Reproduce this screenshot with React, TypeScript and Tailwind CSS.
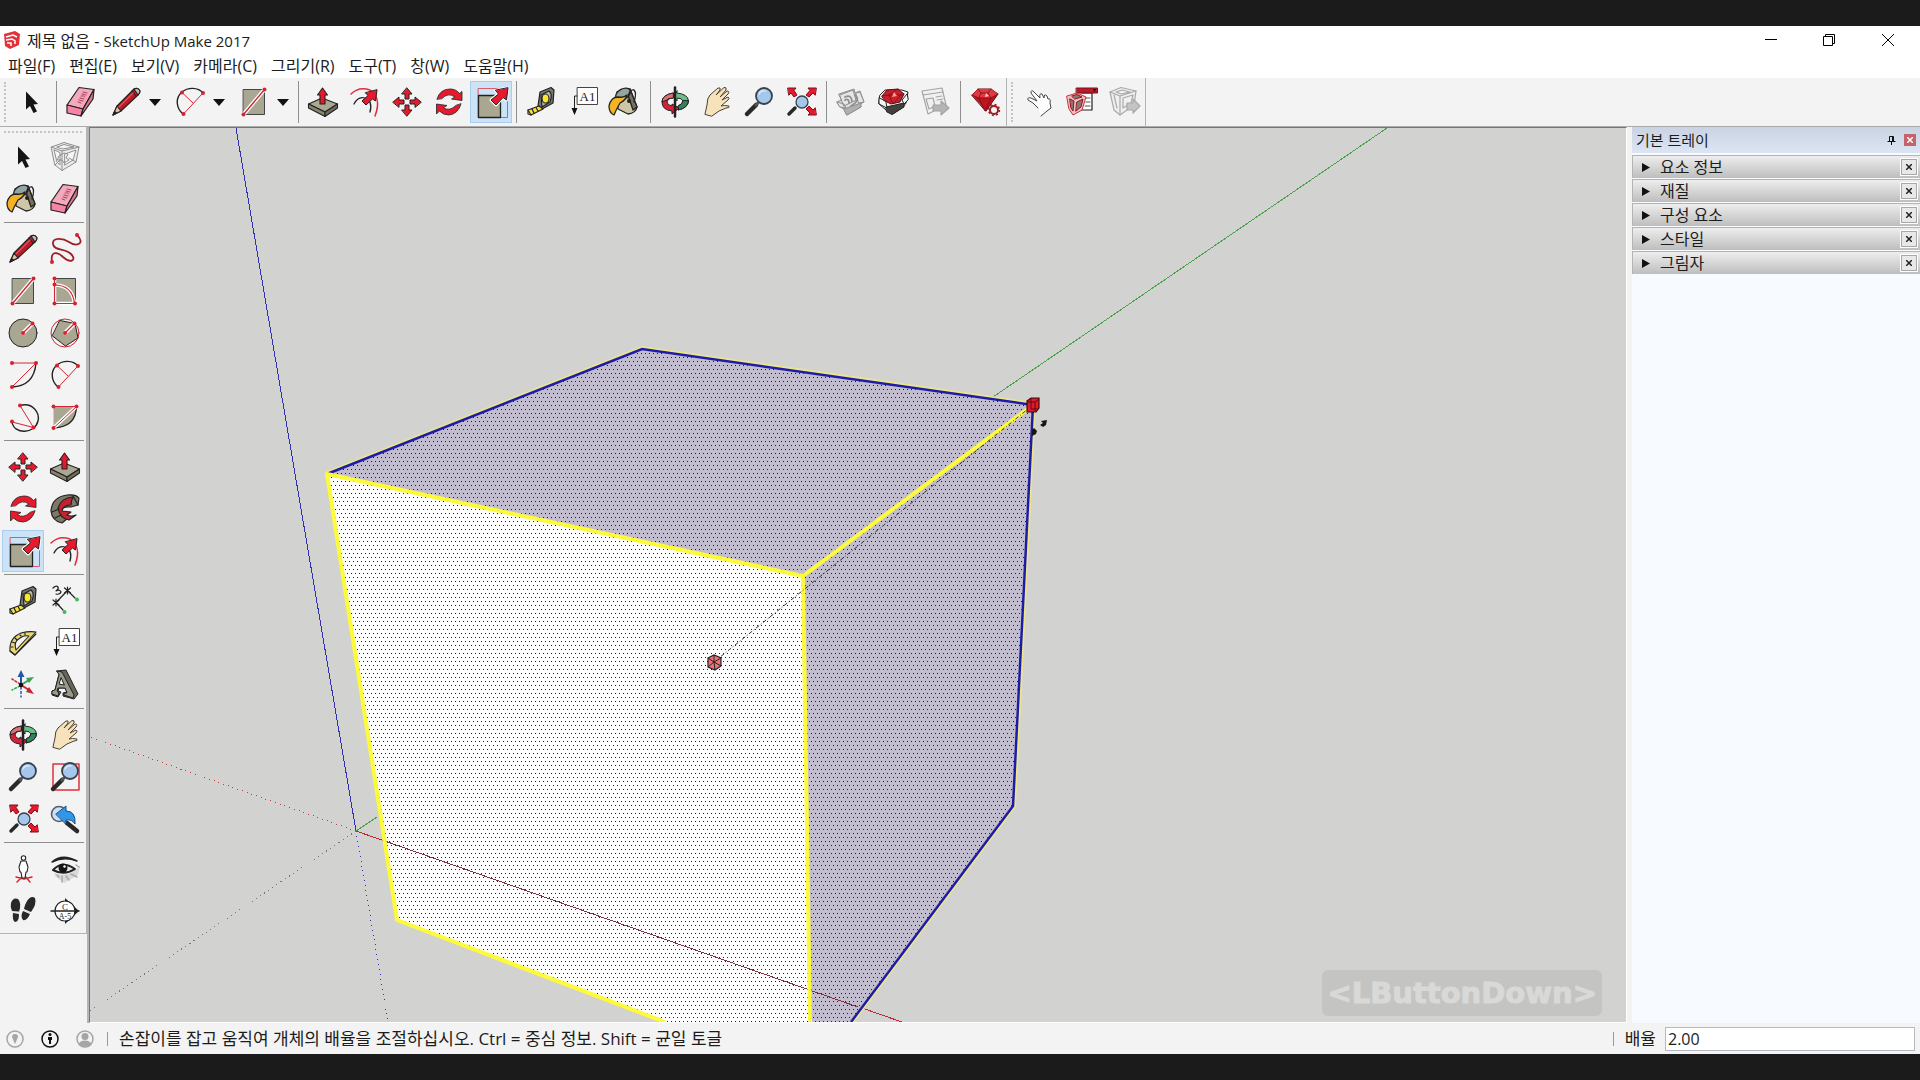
import React from 'react';

const svgProps = {
  viewBox: '0 0 32 32',
  className: 'w-8 h-8 shrink-0 overflow-visible',
  fill: 'none',
  strokeLinecap: 'round' as const,
  strokeLinejoin: 'round' as const,
};

const RED = '#e8192c';
const DARK = '#222222';
const STONE = '#a9a792';

const Dot = ({ x, y }: { x: number; y: number }) => <circle cx={x} cy={y} r="2" fill="#d8202e" />;

const SelectIcon = () => (
  <svg {...svgProps}>
    <path d="M11 5.5V23.5L15 20L18.5 27L22 25.5L18.5 18.5L23 18Z" fill="#151515" />
  </svg>
);

const ComponentIcon = () => (
  <svg {...svgProps} stroke="#8e8e8e" strokeWidth="1">
    <path d="M2.5 6L15 1.5L30 6L27 21L13 29.500L6 24Z" fill="#ececec" />
    <path d="M2.500 6L13 10L30 6M13 10V29.500M5 9L8 21L11 24V12ZM16 13L27 9L24 19L16 24ZM8 6L15 3.500L25 6L14 8Z" fill="#f6f6f6" />
    <path d="M10 15L15 12L19 13L17 17L20 19L15 22L13 19L9 19ZM6 24L11 19M27 21L20 17" />
  </svg>
);

const BucketIcon = () => (
  <svg {...svgProps} stroke={DARK} strokeWidth="1.3">
    <path d="M8 6L21 3L28 21Q27 27 19 28L9 23Z" fill="#cfc6a6" />
    <path d="M18 6L21 3L28 21L24 24Z" fill="#77715e" />
    <ellipse cx="14" cy="8" rx="8" ry="5" transform="rotate(-30 14 8)" fill="#91a5a4" />
    <path d="M0 20Q2 11 9 11Q15 12 18 9Q17 14 11 17Q7 24 5 29Q0 27 0 20Z" fill="#f5b324" />
    <path d="M19 12Q20 3 25 4Q28 7 25 16" />
    <circle cx="20" cy="15" r="1.3" fill={DARK} />
  </svg>
);

const EraserIcon = () => (
  <svg {...svgProps} stroke={DARK} strokeWidth="1.2">
    <path d="M2 19L14 1.5L29 3.5L18 23Z" fill="#f5a9bd" />
    <path d="M2 19L18 23L16 30L2 27Z" fill="#f884a5" />
    <path d="M18 23L29 3.5L28 13L16 30Z" fill="#db7590" />
    <path d="M14 14L18 15M15 12L19 13M16 10Q19 9 20 11M17 8L21 9M18 6L22 7M13 16L16 17" stroke="#9b3850" strokeWidth="0.9" />
  </svg>
);

const PencilIcon = () => (
  <svg {...svgProps} stroke={DARK} strokeWidth="1.1">
    <path d="M3 29L7 20L24 3Q28 1 30 5Q30 7 28 9L11 25Z" fill="#b71e28" />
    <path d="M3 29L7 20L11 25Z" fill="#d9c49c" />
    <path d="M3 29L4.500 25.500L6.500 27Z" fill={DARK} />
    <path d="M22 5L26 10M24 3Q28 1 30 5Q30 7 28 9Z" fill="#c8b9ae" />
    <path d="M9 21L23 7" stroke="#e05560" />
  </svg>
);

const FreehandIcon = () => (
  <svg {...svgProps}>
    <path d="M3 29C1 17 9 19 14 24C22 31 28 27 22 21C16 15 5 18 4 11C3 4 14 5 20 9C27 14 37 11 28 2" stroke="#9c1f2c" strokeWidth="1.8" />
    <Dot x={3} y={29} />
    <Dot x={28} y={2} />
  </svg>
);

const RectIcon = () => (
  <svg {...svgProps}>
    <rect x="5.500" y="3.500" width="21" height="25" fill={STONE} stroke="#444" />
    <path d="M5.500 28.500L26.500 3.500" stroke="#fff" strokeWidth="4" />
    <path d="M5.500 28.500L26.500 3.500" stroke="#c52632" strokeWidth="1.3" />
    <Dot x={5.5} y={28.5} />
    <Dot x={26.5} y={3.5} />
  </svg>
);

const RotRectIcon = () => (
  <svg {...svgProps}>
    <path d="M5.500 3.500H26.500V28.500H5.500Z" fill={STONE} stroke="#444" />
    <path d="M5.500 3.500V28.500H26M5.500 10Q23 10 25.500 28" stroke="#fff" strokeWidth="3.500" />
    <path d="M5.500 3.500V28.500H26M5.500 10Q23 10 25.500 28" stroke="#d22634" strokeWidth="1.2" />
    <Dot x={5.5} y={3.5} />
    <Dot x={5.5} y={9.5} />
    <Dot x={5.5} y={28.5} />
    <Dot x={26} y={28.5} />
  </svg>
);

const CircleIcon = () => (
  <svg {...svgProps}>
    <circle cx="16" cy="16" r="14" fill={STONE} stroke={DARK} />
    <path d="M16 16L25.500 6.500" stroke="#fff" strokeWidth="4" />
    <path d="M16 16L25.500 6.500" stroke="#d22634" strokeWidth="1.3" />
    <Dot x={16} y={16} />
    <Dot x={25.5} y={6.5} />
  </svg>
);

const PolygonIcon = () => (
  <svg {...svgProps}>
    <circle cx="16" cy="16" r="14" stroke="#d22634" />
    <path d="M11 3.500L26 6.500L29 21L16.500 29L3.500 19Z" fill={STONE} stroke={DARK} />
    <path d="M16 16L25.500 6.500" stroke="#fff" strokeWidth="4" />
    <path d="M16 16L25.500 6.500" stroke="#d22634" strokeWidth="1.3" />
    <Dot x={16} y={16} />
    <Dot x={25.5} y={6.5} />
  </svg>
);

const ArcIcon = () => (
  <svg {...svgProps}>
    <path d="M29 4Q27 27 5 28" stroke={DARK} strokeWidth="1.4" />
    <path d="M5 4H29L5 28" stroke="#d22634" />
    <Dot x={5} y={4} />
    <Dot x={29} y={4} />
    <Dot x={5} y={28} />
  </svg>
);

const TwoPointArcIcon = () => (
  <svg {...svgProps}>
    <path d="M9 28C2 22 1 12 8 6C14 1 24 1 29 7" stroke={DARK} strokeWidth="1.4" />
    <path d="M8 6.500L19 17M29 7L9.500 28" stroke="#d22634" />
    <Dot x={8} y={6.5} />
    <Dot x={29} y={7} />
    <Dot x={9.5} y={28} />
  </svg>
);

const ThreePointArcIcon = () => (
  <svg {...svgProps}>
    <path d="M13 4.500C26 1 33 12 31 20C28 33 7 34 5 21" stroke={DARK} strokeWidth="1.4" />
    <path d="M13 4.500L26.500 26.500L5 21" stroke="#d22634" />
    <Dot x={13} y={4.5} />
    <Dot x={5} y={20.5} />
    <Dot x={26.5} y={26.5} />
  </svg>
);

const PieIcon = () => (
  <svg {...svgProps}>
    <path d="M4.500 5.500H27.500Q27 26 4.500 27Z" fill={STONE} />
    <path d="M27.500 5.500Q27 26 4.500 27" stroke={DARK} strokeWidth="1.3" />
    <path d="M4.500 27L27.500 5.500" stroke="#fff" strokeWidth="3.500" />
    <path d="M4.500 5.500H27.500L4.500 27" stroke="#d22634" />
    <Dot x={4.5} y={5.5} />
    <Dot x={27.5} y={5.5} />
    <Dot x={4.5} y={27} />
  </svg>
);

const MoveIcon = () => (
  <svg {...svgProps} fill={RED} stroke={DARK} strokeWidth="1">
    <path d="M16 2L21 8H18V13H14V8H11Z" />
    <path d="M16 30L21 24H18V19H14V24H11Z" />
    <path d="M2 16L8 11V14H13V18H8V21Z" />
    <path d="M30 16L24 11V14H19V18H24V21Z" />
  </svg>
);

const PushPullIcon = () => (
  <svg {...svgProps} stroke={DARK} strokeWidth="1.100">
    <path d="M1.500 18L15 12L30.500 18L18 26Z" fill="#aaa892" />
    <path d="M1.500 18L18 26V30.500L1.500 22Z" fill="#88866f" />
    <path d="M18 26L30.500 18V22L18 30.500Z" fill="#6f6d5c" />
    <path d="M15.500 2L20.500 9H18V18H13V9H10.500Z" fill={RED} />
  </svg>
);

const RotateIcon = () => (
  <svg {...svgProps} fill={RED} stroke={DARK} strokeWidth="0.800">
    <path d="M4 13Q7 3 17 3Q23 3 26.500 7.500L29 5.500V14.500L18.500 13L22 11Q15 6 9 12.500Z" />
    <path d="M28 18Q25 28 16 29Q10 29 6.500 25L3.500 28V18L14 19.500L10.500 21.500Q16 26 23 19.500Z" />
  </svg>
);

const FollowMeIcon = () => (
  <svg {...svgProps} stroke={DARK} strokeWidth="1.200">
    <path d="M2 18Q3 4 18 2Q27 1 30 5L29 12L22 14Q12 13 11 19Q14 25 19 25L13 30Q3 28 2 18Z" fill="#7b7968" />
    <path d="M9 15Q12 5 24 4Q22 8 22 12Q14 12 13 18L22 19L18 22Q22 24 27 22L20 27Q11 26 9 15Z" fill="#c3222f" />
    <path d="M3 19L10 16M24 3L29 12M6 25L12 22" />
  </svg>
);

const ScaleIcon = () => (
  <svg {...svgProps}>
    <rect x="3.500" y="2.500" width="29" height="29" stroke="#e0596a" />
    <rect x="3.500" y="9.500" width="22" height="22" fill={STONE} stroke={DARK} strokeWidth="1.300" />
    <path d="M33 2L31.500 14L28 11.500L21 19L16 14L23.500 8L20.500 4.500Z" fill={RED} stroke="#fff" strokeWidth="3" />
    <path d="M33 2L31.500 14L28 11.500L21 19L16 14L23.500 8L20.500 4.500Z" fill={RED} stroke={DARK} />
  </svg>
);

const OffsetIcon = () => (
  <svg {...svgProps}>
    <path d="M2 8Q10 0 21 4Q33 12 26 30" stroke="#e02b3b" strokeWidth="1.500" />
    <path d="M5 18Q9 10 16 12Q24 15 21 26" stroke={DARK} strokeWidth="1.300" />
    <path d="M28 4L26.500 15L23.500 13L17 19L13 15L19 9.500L16.500 7Z" fill={RED} stroke={DARK} />
  </svg>
);

const TapeIcon = () => (
  <svg {...svgProps} stroke={DARK} strokeWidth="1.200">
    <path d="M15 6L26 1.500L29 4L28 17L17 23L13 20Z" fill="#77776f" />
    <path d="M16 9L24 5Q28 8 25 16L17 21Z" fill="#b9b9aa" />
    <ellipse cx="20.500" cy="12.500" rx="3.500" ry="4.500" fill="#f8e92f" />
    <path d="M14 20L3 24L6 29L18 23Z" fill="#f4e13a" />
    <path d="M7 23L9 27M11 21.500L13 25M3 24V28L6 29" />
  </svg>
);

const DimensionIcon = () => (
  <svg {...svgProps} stroke={DARK} strokeWidth="1.200">
    <path d="M7 17.500L18.500 5.500M7 17.500L14 25M18.500 5.500L26 13" />
    <path d="M4 15L10 20M4 20L10 15M7 14V21M15.500 3L21.500 8M15.500 8L21.500 3M18.500 2V9" />
    <path d="M4 3Q7 0 9 2Q10 4 7 6Q11 4 12 7Q11 10 7 9" />
    <circle cx="15.500" cy="27" r="2" fill="#44b85a" stroke="none" />
    <circle cx="28" cy="14.500" r="2" fill="#44b85a" stroke="none" />
  </svg>
);

const ProtractorIcon = () => (
  <svg {...svgProps} stroke={DARK} strokeWidth="1.100">
    <path d="M29 5L8 28L3 24Q2 11 14 6Q22 4 29 5Z" fill="#e8d775" />
    <path d="M22 9L9 23Q6 15 13 11Q17 8 22 9Z" fill="#f4f4f4" />
    <path d="M4 20H6M5 15L8 16M8 11L10 13M13 8L14 9M18 6V8M3 24L8 28L29 7" />
  </svg>
);

const TextIcon = () => (
  <svg {...svgProps}>
    <path d="M10.500 10H7.500V25" stroke={DARK} />
    <path d="M4.500 22H10.500L7.500 29Z" fill="#111" />
    <rect x="10.500" y="1.500" width="20" height="17" fill="#fff" stroke="#444" />
    <text x="20.500" y="14.500" textAnchor="middle" fontSize="13" fill="#222" className="font-['Liberation_Serif',serif]">A1</text>
  </svg>
);

const AxesIcon = () => (
  <svg {...svgProps}>
    <path d="M14 16V5" stroke="#2557a8" strokeWidth="2" />
    <path d="M14 1L17.500 8H10.500Z" fill="#2557a8" />
    <path d="M14 16L22 11" stroke="#3a9f57" strokeWidth="2" />
    <path d="M27 8L19 9L22 14Z" fill="#3a9f57" />
    <path d="M14 16L22 21" stroke="#c52632" strokeWidth="2" />
    <path d="M27 25L19 23L22 18Z" fill="#c52632" />
    <path d="M13 15L5 10" stroke="#c52632" strokeWidth="1.500" strokeDasharray="2 2" />
    <path d="M13 17L5 21" stroke="#3a9f57" strokeWidth="1.500" strokeDasharray="2 2" />
    <path d="M14 18V28" stroke="#2557a8" strokeWidth="1.500" strokeDasharray="2 2.500" />
    <circle cx="14" cy="16" r="2.200" fill="#111" />
  </svg>
);

const ThreeDTextIcon = () => (
  <svg {...svgProps} stroke={DARK} strokeWidth="1">
    <path d="M8 2L17 1L29 25L25 30L14 27V24L18 23L16 19H10L9 22L12 23L9 28L3 26V22L6 21L10 5Z" fill="#66665d" />
    <path d="M8 2L13 3L25 26L24 29L15 26V24L18 24L16 19H9L8 22L10 24L9 27L3 25V22L6 21L10 6Z" fill="#9b998a" />
    <path d="M12 9L10 15L15 16Z" fill="#f3f3f3" />
  </svg>
);

const OrbitIcon = () => (
  <svg {...svgProps} stroke={DARK} strokeWidth="1">
    <path d="M18 7Q29 8 29.500 15Q29 22 19 24V20Q24 18 24 15Q23 12 18 12V15L14 10L18 5Z" fill="#68be88" />
    <path d="M24 15Q24 18 19 20V24Q29 22 29.500 15Z" fill="#33845a" />
    <path d="M14 7Q3 9 3 16Q3 24 13 25V28L20 22L13 18V20Q8 19 8 16Q9 12 14 12Z" fill="#d3233c" />
    <path d="M14 7Q3 9 3 16L8 14Q9 12 14 12Z" fill="#dd6f75" />
    <path d="M16 1.500V30.500" strokeWidth="2.500" />
  </svg>
);

const HandIcon = () => (
  <svg {...svgProps} stroke="#4d4030" strokeWidth="1">
    <path d="M4 28L6 19Q6 12 9 9L17 2Q20 1 19 4L15 9L23 1.500Q26 1 25 4L19 11L26 5Q29 5 27 8L21 14L27 11Q29 12 27 14L20 20Q23 19 28 20Q29 22 25 22L18 25L11 30Z" fill="#f6e3bc" />
  </svg>
);

const Glass = () => (
  <>
    <path d="M4 28L13 19" stroke="#292929" strokeWidth="4.500" />
    <path d="M13 19L15 17" stroke="#555" strokeWidth="3" />
    <circle cx="21" cy="10" r="8" fill="#a6c7ec" stroke="#39414d" strokeWidth="1.800" />
    <path d="M16 8Q18 4 22 5" stroke="#d9e9fa" strokeWidth="1.500" />
  </>
);

const ZoomIcon = () => (
  <svg {...svgProps}>
    <Glass />
  </svg>
);

const ZoomWindowIcon = () => (
  <svg {...svgProps}>
    <rect x="4" y="3" width="26" height="26" stroke="#e0303e" strokeWidth="1.500" />
    <Glass />
  </svg>
);

const ZoomExtentsIcon = () => (
  <svg {...svgProps}>
    <g fill={RED} stroke="#7d101a" strokeWidth="1">
      <path d="M3 2H11L9 4.500L12 9L9 11L6 7L4 9Z" />
      <path d="M31 2H23L25 4.500L21 9L24 11L28 7L30 9Z" />
      <path d="M31 29H23L25 27L21 23L24 20L28 24L30 22Z" />
    </g>
    <path d="M4 28L10 22" stroke="#292929" strokeWidth="3.500" />
    <circle cx="17" cy="16" r="6" fill="#a6c7ec" stroke="#39414d" strokeWidth="1.300" />
  </svg>
);

const PreviousIcon = () => (
  <svg {...svgProps}>
    <circle cx="10" cy="11" r="7.500" fill="#cbe0f5" stroke="#53616f" strokeWidth="1.600" />
    <path d="M18 20L28 28" stroke="#292929" strokeWidth="4.500" />
    <path d="M7 11L17 3V8Q27 8 26 21Q23 16 17 17V21Z" fill="#3296e8" stroke="#1b4e82" />
  </svg>
);

const PositionCameraIcon = () => (
  <svg {...svgProps} stroke={DARK} strokeWidth="1.100">
    <path d="M10 29L17 22L23 29M9 24L17 26L25 24" stroke="#d22634" strokeWidth="1.500" />
    <circle cx="16.500" cy="5" r="2.200" fill="#fff" />
    <path d="M14 8H19L21 14L20 19H19L18 25H15L14 19H13L12 14Z" fill="#fff" />
  </svg>
);

const LookIcon = () => (
  <svg {...svgProps}>
    <path d="M6 23L15 30L29 22L31 13L24 19Q14 24 5 20Z" fill="#d9d9d9" />
    <path d="M3 9Q13 0 28 8Q15 3 3 9Z" fill="#222" stroke="#222" strokeWidth="1.500" />
    <path d="M4 17Q13 7 26 16Q15 23 4 17Z" fill="#e9e9e9" stroke="#222" strokeWidth="2" />
    <circle cx="14" cy="15" r="4.500" fill="#151515" />
    <circle cx="15.500" cy="13.500" r="1.200" fill="#fff" />
    <path d="M8 22L10 24M13 23L13 29M17 23L20 27M22 21L28 24M27 12L30 14" stroke="#aaa" strokeWidth="1.500" />
  </svg>
);

const WalkIcon = () => (
  <svg {...svgProps} fill="#282828">
    <path d="M4 8Q6 2 11 4Q15 8 12 17L5 16Q3 12 4 8ZM6 18L12 19Q12 27 8 27Q5 25 6 18Z" />
    <path d="M20 6Q24 0 28 3Q30 9 24 17L17 14Q18 9 20 6ZM16 16L23 19Q20 26 16 25Q13 22 16 16Z" />
    <path d="M5 17H12M17 15L23 18" stroke="#ddd" strokeWidth="1.200" />
  </svg>
);

const SectionIcon = () => (
  <svg {...svgProps}>
    <path d="M16 3L30 16L16 29Z" fill="#222" />
    <circle cx="16" cy="16" r="10" fill="#fff" stroke={DARK} strokeWidth="1.200" />
    <path d="M2 16H30" stroke={DARK} strokeWidth="1.400" />
    <text x="16" y="14.500" textAnchor="middle" fontSize="9" fill="#222" className="font-['Liberation_Serif',serif]">C</text>
    <text x="16" y="23.500" textAnchor="middle" fontSize="8" fill="#222" className="font-['Liberation_Serif',serif]">A-5</text>
  </svg>
);

const GetModelsIcon = () => (
  <svg {...svgProps} stroke="#8f8f8f" strokeWidth="1">
    <path d="M4 8L19 3L20 7L25 5L29 16L25 18L26 21L12 29L9 23L5 21L2 16L6 14Z" fill="#dcdcdc" />
    <path d="M9 23L26 17V21L12 29Z" fill="#b0b0b0" />
    <path d="M5 9L18 4L21 14L9 20ZM21 7L25 6L29 16L24 17ZM2 16L9 18L11 22L5 21Z" fill="#e6e6e6" />
    <path d="M10 11Q16 8 17 15M10 14Q14 12 14 17M20 9Q26 14 16 20" strokeWidth="1.800" />
  </svg>
);

const GemShape = () => (
  <>
    <path d="M3 9L9 3H22L29 8L17 25Z" fill="#c1121f" stroke="#5c0a12" />
    <path d="M3 9L9 3H22L29 8L22 12H10Z" fill="#e2383f" />
    <path d="M3 9L10 12L16 25L22 12L29 8M10 12H22M9 3L12 7L10 12M22 3L19 7L22 12M12 7H19" stroke="#7d0e18" strokeWidth="0.800" />
    <path d="M17 7L20 10L16 11Z" fill="#ffc9c6" />
  </>
);

const WarehouseIcon = () => (
  <svg {...svgProps} stroke={DARK} strokeWidth="1">
    <path d="M3 9L8 4L25 4L31 6L29 17L26 21L16 28L9 24L2 18Z" fill="#f4f4f4" />
    <path d="M9 21L27 17V21L15 28.500L10 26Z" fill="#44403d" />
    <path d="M5 10L10 4L21 3L27 8L23 16L14 18L8 15Z" fill="#c7202b" stroke="#5c0a12" />
    <path d="M5 10L12 9L21 3M12 9L16 18L24 9L27 8M12 9H24" stroke="#7d0e18" strokeWidth="0.800" />
    <path d="M17 6L20 10L15 11Z" fill="#ff9a96" stroke="none" />
    <path d="M2 12V18L10 22L9 16ZM30 8L25 14L27 18L31 14Z" fill="#f4f4f4" />
  </svg>
);

const ShareIcon = () => (
  <svg {...svgProps} stroke="#a3a3a3" strokeWidth="1.100">
    <path d="M3 5L23 2L27 19L9 28Z" fill="#f0f0f0" />
    <path d="M4 9L24 6M7 13L14 12L16 20L10 23ZM17 11L23 10M18 14L24 13" />
    <path d="M14 19H22V15L30 22L22 29V25H14Z" fill="#b5b5b5" />
  </svg>
);

const ExtensionIcon = () => (
  <svg {...svgProps}>
    <GemShape />
    <circle cx="25" cy="24" r="4" fill="#f4f4f4" stroke="#9c1a24" strokeWidth="2" />
    <circle cx="25" cy="24" r="5.500" stroke="#9c1a24" strokeWidth="1.500" strokeDasharray="2 2.300" strokeLinecap="butt" />
  </svg>
);

const InteractIcon = () => (
  <svg {...svgProps} stroke="#444" strokeWidth="1">
    <path d="M14 22L9 17L4 14Q3 11 7 12L13 15L7 7Q7 3 10 6L16 12Q15 7 18 8L20 12Q20 7 23 10L24 13Q27 12 26 17L27 22L23 25L17 30" fill="#fff" />
  </svg>
);

const OptionsIcon = () => (
  <svg {...svgProps}>
    <path d="M16 7H26V24H14" fill="#fff" stroke={DARK} strokeWidth="1.200" />
    <rect x="10.500" y="2" width="21" height="5" fill="#b71c2a" stroke="#7d0e18" />
    <path d="M27 3H30L28.500 6Z" fill="#300" />
    <path d="M20 12H24M20 16H24M19 20H24" stroke="#555" />
    <path d="M1 10L11 7L20 11L16 24L7 29L3 23Z" fill="#f3bfc3" stroke="#cf2c39" />
    <path d="M4 13L8 15L7 25L5 22ZM11 16L17 13L15 21L10 25ZM6 10L11 8.500L16 11L9 13Z" fill="#857a76" stroke="#8d1620" />
  </svg>
);

const AttributesIcon = () => (
  <svg {...svgProps} stroke="#a9a9a9" strokeWidth="1.200">
    <path d="M2 6L13 1.500L28 5L26 19L12 29L6 24Z" fill="#f0f0f0" />
    <path d="M2 6L12 10L28 5M12 10V29M6 9L9 22M8 6L14 4L22 6L13 8ZM15 12L25 9L23 17L15 22Z" />
    <path d="M19 17H25V13L32 20L25 27V24H19Z" fill="#c4c4c4" />
  </svg>
);

interface ToolProps {
  name: string;
  icon: React.FC;
  active?: boolean;
}

const Tool = ({ name, icon: Icon, active }: ToolProps) => (
  <button
    type="button"
    aria-label={name}
    className={`flex h-[42px] w-[42px] shrink-0 items-center justify-center border ${active ? 'border-[#a9cdee] bg-[#cce2f7]' : 'border-transparent'}`}
  >
    <Icon />
  </button>
);

const SplitTool = ({ name, icon: Icon }: ToolProps) => (
  <div className="flex h-[42px] shrink-0">
    <button type="button" aria-label={name} className="flex w-[47px] items-center justify-center">
      <Icon />
    </button>
    <button type="button" aria-label={`${name} 더보기`} className="flex w-[17px] items-center">
      <svg viewBox="0 0 12 7" className="h-[7px] w-3" fill="#111">
        <path d="M0 0H12L6 7Z" />
      </svg>
    </button>
  </div>
);

const Divider = () => (
  <div className="flex h-[42px] w-2 shrink-0 justify-center">
    <div className="w-px bg-[#8f8f8f]" />
  </div>
);

const Grip = () => <div className="my-1 ml-1 mr-2 w-0 border-l-2 border-dotted border-[#c4c4c4]" />;

const menus = ['파일(F)', '편집(E)', '보기(V)', '카메라(C)', '그리기(R)', '도구(T)', '창(W)', '도움말(H)'];

const sideTools: ToolProps[][] = [
  [
    { name: '선택', icon: SelectIcon },
    { name: '구성 요소 만들기', icon: ComponentIcon },
    { name: '페인트통', icon: BucketIcon },
    { name: '지우개', icon: EraserIcon },
  ],
  [
    { name: '선', icon: PencilIcon },
    { name: '자유곡선', icon: FreehandIcon },
    { name: '직사각형', icon: RectIcon },
    { name: '회전된 직사각형', icon: RotRectIcon },
    { name: '원', icon: CircleIcon },
    { name: '다각형', icon: PolygonIcon },
    { name: '호', icon: ArcIcon },
    { name: '2점 호', icon: TwoPointArcIcon },
    { name: '3점 호', icon: ThreePointArcIcon },
    { name: '파이', icon: PieIcon },
  ],
  [
    { name: '이동', icon: MoveIcon },
    { name: '밀기/끌기', icon: PushPullIcon },
    { name: '회전', icon: RotateIcon },
    { name: '따라가기', icon: FollowMeIcon },
    { name: '배율', icon: ScaleIcon, active: true },
    { name: '오프셋', icon: OffsetIcon },
  ],
  [
    { name: '줄자', icon: TapeIcon },
    { name: '치수', icon: DimensionIcon },
    { name: '각도기', icon: ProtractorIcon },
    { name: '텍스트', icon: TextIcon },
    { name: '축', icon: AxesIcon },
    { name: '3D 텍스트', icon: ThreeDTextIcon },
  ],
  [
    { name: '궤도', icon: OrbitIcon },
    { name: '이동 보기', icon: HandIcon },
    { name: '확대/축소', icon: ZoomIcon },
    { name: '창 확대', icon: ZoomWindowIcon },
    { name: '범위 확대', icon: ZoomExtentsIcon },
    { name: '이전', icon: PreviousIcon },
  ],
  [
    { name: '카메라 배치', icon: PositionCameraIcon },
    { name: '둘러보기', icon: LookIcon },
    { name: '걷기', icon: WalkIcon },
    { name: '단면', icon: SectionIcon },
  ],
];

const trayPanels = ['요소 정보', '재질', '구성 요소', '스타일', '그림자'];

const TitleBar = () => (
  <header className="bg-white">
    <div className="flex h-7 items-center justify-between">
      <div className="flex items-center gap-[7px] pl-1">
        <svg viewBox="0 0 16 18" className="h-[18px] w-4">
          <path d="M0 3L11 0L16 3L15 14L6 18L1 15Z" fill="#e2313b" />
          <path d="M2 6L9 4L13 6M2 9L8 8L11 10V13M3 12L7 12V15" stroke="#fff" strokeWidth="1.500" fill="none" />
        </svg>
        <h1 className="pt-px text-[16px] leading-6">
          제목 없음 - <span className="text-[15px]">SketchUp Make 2017</span>
        </h1>
      </div>
      <div className="flex pr-[2px]">
        <button type="button" aria-label="최소화" className="flex h-7 w-[58px] items-center justify-center">
          <svg viewBox="0 0 12 12" className="h-3 w-3" stroke="#000">
            <path d="M0 5.500H12" />
          </svg>
        </button>
        <button type="button" aria-label="이전 크기로" className="flex h-7 w-[58px] items-center justify-center">
          <svg viewBox="0 0 12 12" className="h-3 w-3" stroke="#000" fill="none">
            <path d="M0.500 2.500H9.500V11.500H0.500ZM2.500 2.500V0.500H11.500V9.500H9.500" />
          </svg>
        </button>
        <button type="button" aria-label="닫기" className="flex h-7 w-[60px] items-center justify-center">
          <svg viewBox="0 0 12 12" className="h-3 w-3" stroke="#000">
            <path d="M0 0L12 12M12 0L0 12" />
          </svg>
        </button>
      </div>
    </div>
    <nav className="flex h-6 items-center gap-[14px] px-2">
      {menus.map((menu) => (
        <button key={menu} type="button" className="text-[16px] leading-6">
          {menu}
        </button>
      ))}
    </nav>
  </header>
);

const TopToolbar = () => (
  <div className="flex h-12 bg-[#f3f3f3]">
    <div className="flex items-center border-r border-[#b5b5b5]">
      <div className="flex w-[10px] self-stretch">
        <Grip />
      </div>
      <Tool name="선택" icon={SelectIcon} />
      <Divider />
      <Tool name="지우개" icon={EraserIcon} />
      <SplitTool name="선" icon={PencilIcon} />
      <SplitTool name="호" icon={TwoPointArcIcon} />
      <SplitTool name="도형" icon={RectIcon} />
      <Divider />
      <Tool name="밀기/끌기" icon={PushPullIcon} />
      <Tool name="오프셋" icon={OffsetIcon} />
      <Tool name="이동" icon={MoveIcon} />
      <Tool name="회전" icon={RotateIcon} />
      <Tool name="배율" icon={ScaleIcon} active />
      <Divider />
      <Tool name="줄자" icon={TapeIcon} />
      <Tool name="텍스트" icon={TextIcon} />
      <Tool name="페인트통" icon={BucketIcon} />
      <Divider />
      <Tool name="궤도" icon={OrbitIcon} />
      <Tool name="이동 보기" icon={HandIcon} />
      <Tool name="확대/축소" icon={ZoomIcon} />
      <Tool name="범위 확대" icon={ZoomExtentsIcon} />
      <Divider />
      <Tool name="모델 가져오기" icon={GetModelsIcon} />
      <Tool name="확장 웨어하우스" icon={WarehouseIcon} />
      <Tool name="모델 공유" icon={ShareIcon} />
      <Divider />
      <Tool name="확장 관리자" icon={ExtensionIcon} />
    </div>
    <div className="flex items-center border-r border-[#b5b5b5]">
      <div className="flex w-3 self-stretch">
        <Grip />
      </div>
      <Tool name="상호 작용" icon={InteractIcon} />
      <Tool name="구성 요소 옵션" icon={OptionsIcon} />
      <Tool name="구성 요소 특성" icon={AttributesIcon} />
    </div>
  </div>
);

const SideToolbar = () => (
  <aside className="w-[87px] shrink-0 bg-[#f3f3f3]">
    <div className="border-b border-r border-[#b5b5b5] pb-px pt-1">
      <div className="mx-1 mb-[3px] border-t-2 border-dotted border-[#c4c4c4]" />
      {sideTools.map((group, i) => (
        <div key={i}>
          {i > 0 && (
            <div className="h-2 px-1 pt-[2px]">
              <div className="h-px w-20 bg-[#8f8f8f]" />
            </div>
          )}
          <div className="grid grid-cols-[42px_42px] pl-[2px]">
            {group.map((tool) => (
              <Tool key={tool.name} {...tool} />
            ))}
          </div>
        </div>
      ))}
    </div>
  </aside>
);

const Viewport = () => (
  <main className="relative min-w-0 flex-1 border-b border-l border-r border-t border-b-white border-l-[#777] border-r-white border-t-[#777] bg-[#d2d2d0]">
    <svg viewBox="90 128 1536 894" preserveAspectRatio="xMinYMin slice" className="absolute inset-0 h-full w-full" fill="none">
      <defs>
        <pattern id="stipple" width="4" height="8" patternUnits="userSpaceOnUse">
          <rect x="1" y="1" width="1" height="1" fill="#1c1c2c" />
          <rect x="3" y="5" width="1" height="1" fill="#1c1c2c" />
        </pattern>
      </defs>

      {/* axes behind the cube */}
      <g shapeRendering="crispEdges">
        <path d="M236 128L356 831" stroke="#3030b8" />
        <path d="M356 831L388 1022" stroke="#3030b8" strokeDasharray="1 4" />
        <path d="M1387 128L993 397" stroke="#4aa34a" />
        <path d="M377 817L356 831" stroke="#4aa34a" />
        <path d="M356 831L90 1011" stroke="#777" strokeDasharray="1 4" />
        <path d="M356 831L90 737" stroke="#c23a3a" strokeDasharray="1 4" />
        <path d="M356 831L902 1022" stroke="#c02a38" />
      </g>

      {/* faces */}
      <path d="M327 474L642 349L1033 405L803 576Z" fill="#c1bdcf" />
      <path d="M803 576L1033 405L1013 806L851 1022H810Z" fill="#c1bdcf" />
      <path d="M327 474L803 576L810 1022H665L397 920Z" fill="#ffffff" />
      <path d="M327 474L642 349L1033 405L1013 806L851 1022H665L397 920Z" fill="url(#stipple)" shapeRendering="crispEdges" />
      <path d="M379 839L858 1007" stroke="#7d3440" shapeRendering="crispEdges" />

      {/* edges */}
      <path d="M327 473L642 348L1034 404L1014 806L852 1022" stroke="#eee58a" strokeWidth="4" />
      <path d="M327 474L642 349L1033 405L1013 806L851 1022" stroke="#1c1caa" strokeWidth="2.500" />
      <path d="M665 1022L397 920L327 474L803 576L1033 405M803 576L810 1022" stroke="#fdfb3a" strokeWidth="4" strokeLinejoin="round" />
      <path d="M714 662L1033 405" stroke="#333" strokeDasharray="4 2 1 2" />

      {/* scale grips */}
      <path d="M708 658L714 655L721 658V666L715 670L708 667Z" fill="#ec7479" stroke="#222" strokeWidth="1.200" />
      <path d="M708 658L714 662L721 658M714 662L715 670M714 655V662M708 667L714 662L721 666" stroke="#222" />
      <path d="M1027 401L1031 398H1039V408L1036 412H1027Z" fill="#e01a28" stroke="#3a0a0e" strokeWidth="1.200" />
      <path d="M1027 402H1035L1039 399M1035 402V411M1031 399V409H1038" stroke="#5e0a12" />

      {/* resize cursor */}
      <path d="M1032 430L1034 428L1037 431L1036 434L1032 436Z" fill="#151515" />
      <path d="M1047 420L1041 421L1043 423L1040 425L1043 427L1046 425Z" fill="#151515" />
    </svg>
    <div className="absolute bottom-[6px] right-6 rounded-md bg-[#c4c4c2] px-[5px] font-['DejaVu_Sans',sans-serif] text-[29px] font-bold leading-[46px] text-[#d9d9d7] [-webkit-text-stroke:1px_#d9d9d7]">
      &lt;LButtonDown&gt;
    </div>
  </main>
);

const Tray = () => (
  <aside className="w-72 shrink-0 bg-[#f7faff]">
    <div className="mb-[2px] flex h-[26px] items-center justify-between bg-gradient-to-b from-[#c9d3e2] to-[#dbe5f4] px-1">
      <h2 className="text-[15px] leading-6">기본 트레이</h2>
      <div className="flex items-center gap-2">
        <button type="button" aria-label="고정">
          <svg viewBox="0 0 9 10" className="h-[10px] w-[9px]" stroke="#111" fill="none">
            <path d="M2.500 6V1.500H6.500V6M5.500 1V6M0.500 6.500H8.500M4.500 6.500V10" />
          </svg>
        </button>
        <button type="button" aria-label="트레이 닫기" className="flex h-3 w-3 items-center justify-center bg-[#c5636a]">
          <svg viewBox="0 0 6 6" className="h-[6px] w-[6px]" stroke="#fff" strokeWidth="1.500">
            <path d="M0 0L6 6M6 0L0 6" />
          </svg>
        </button>
      </div>
    </div>
    {trayPanels.map((panel) => (
      <section key={panel} className="mb-px flex h-[23px] items-center border-l border-t border-[#b4b4b4] bg-gradient-to-b from-[#eeeeee] to-[#bebebe] pr-[3px]">
        <button type="button" className="flex flex-1 items-center gap-[10px] pl-[9px] text-left text-[16px] leading-[22px]">
          <svg viewBox="0 0 8 9" className="h-[9px] w-2" fill="#111">
            <path d="M0 0L8 4.500L0 9Z" />
          </svg>
          {panel}
        </button>
        <button type="button" aria-label={`${panel} 닫기`} className="flex h-4 w-4 items-center justify-center border border-[#a8a8a8] bg-[#e8e8e8] outline outline-white">
          <svg viewBox="0 0 6 6" className="h-[6px] w-[6px]" stroke="#222" strokeWidth="1.500">
            <path d="M0 0L6 6M6 0L0 6" />
          </svg>
        </button>
      </section>
    ))}
  </aside>
);

const StatusBar = () => (
  <footer className="flex h-[31px] shrink-0 items-center justify-between bg-[#f3f3f3] pl-[6px] pr-[5px]">
    <div className="flex items-center gap-[17px]">
      <button type="button" aria-label="위치">
        <svg viewBox="0 0 18 18" className="h-[18px] w-[18px]" fill="none">
          <circle cx="9" cy="9" r="8" stroke="#a5a5a5" strokeWidth="1.500" />
          <path d="M9 14L6 7Q6 4 9 4Q12 4 12 7Z" fill="#a5a5a5" />
        </svg>
      </button>
      <button type="button" aria-label="정보">
        <svg viewBox="0 0 18 18" className="h-[18px] w-[18px]" fill="none">
          <circle cx="9" cy="9" r="8" stroke="#111" strokeWidth="1.500" />
          <circle cx="9" cy="4.500" r="1.500" fill="#111" />
          <path d="M7 7H11V10H10V14H8V10H7Z" fill="#111" />
        </svg>
      </button>
      <button type="button" aria-label="로그인">
        <svg viewBox="0 0 18 18" className="h-[18px] w-[18px]" fill="none">
          <circle cx="9" cy="9" r="8" stroke="#a5a5a5" strokeWidth="1.500" />
          <circle cx="9" cy="6.500" r="3.500" fill="#a5a5a5" />
          <path d="M2.500 14Q4 10.500 9 10.500Q14 10.500 15.500 14Q9 20 2.500 14Z" fill="#a5a5a5" />
        </svg>
      </button>
      <p className="-ml-1 flex items-center gap-[11px] text-[17px] leading-6">
        <span className="h-[14px] w-px bg-[#999]" />
        손잡이를 잡고 움직여 개체의 배율을 조절하십시오. Ctrl = 중심 정보. Shift = 균일 토글
      </p>
    </div>
    <div className="flex items-center">
      <span className="mr-[11px] h-[14px] w-px bg-[#999]" />
      <label htmlFor="vcb" className="mr-[9px] text-[17px] leading-6">
        배율
      </label>
      <input id="vcb" defaultValue="2.00" className="h-6 w-[250px] border border-[#b4bac4] bg-white px-[2px] text-[16px] outline-none" />
    </div>
  </footer>
);

export default function App() {
  return (
    <div className="flex h-screen flex-col bg-[#f3f3f3] font-['Open_Sans','Noto_Sans_CJK_KR',sans-serif] text-[#1c1c1c]">
      <div className="h-[26px] shrink-0 bg-[#1b1b1b]" />
      <TitleBar />
      <TopToolbar />
      <div className="flex min-h-0 flex-1 border-t border-[#ababab]">
        <SideToolbar />
        <div className="w-[2px] shrink-0 bg-[#b4b4b4]" />
        <Viewport />
        <div className="w-[5px] shrink-0" />
        <Tray />
      </div>
      <StatusBar />
      <div className="h-[26px] shrink-0 bg-[#1b1b1b]" />
    </div>
  );
}
